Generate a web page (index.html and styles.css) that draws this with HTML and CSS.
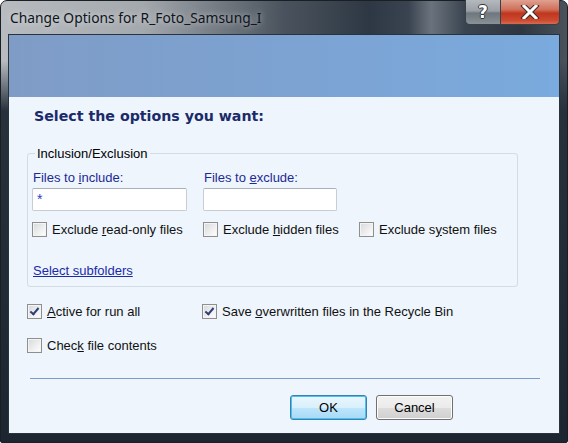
FILE: index.html
```html
<!DOCTYPE html>
<html lang="en">
<head>
  <meta charset="UTF-8">
  <title>Change Options</title>
  <link rel="stylesheet" href="styles.css">
</head>
<body>
  <div class="window">
    <div class="titlebar">
      <span class="title">Change Options for R_Foto_Samsung_I</span>
      <div class="caption-buttons">
        <span class="cap help">?</span>
        <span class="cap close">
          <svg width="20" height="14" viewBox="0 0 20 14">
            <path d="M4 1 L16 13 M16 1 L4 13" stroke="#3a2a28" stroke-width="5" stroke-linecap="square"/>
            <path d="M4 1 L16 13 M16 1 L4 13" stroke="#fff" stroke-width="3" stroke-linecap="square"/>
          </svg>
        </span>
      </div>
    </div>

    <div class="client">
      <div class="banner"></div>

      <div class="content">
        <h1>Select the options you want:</h1>

        <fieldset class="group">
          <legend>Inclusion/Exclusion</legend>
          <div class="fields">
            <div class="field field-include">
              <label>Files to <u>i</u>nclude:</label>
              <div class="textbox">*</div>
            </div>
            <div class="field field-exclude">
              <label>Files to <u>e</u>xclude:</label>
              <div class="textbox"></div>
            </div>
          </div>
          <div class="check-row">
            <label class="check w-readonly"><span class="box"></span><span>Exclude <u>r</u>ead-only files</span></label>
            <label class="check w-hidden"><span class="box"></span><span>Exclude <u>h</u>idden files</span></label>
            <label class="check"><span class="box"></span><span>Exclude s<u>y</u>stem files</span></label>
          </div>
          <a class="link" href="#">Select subfolders</a>
        </fieldset>

        <div class="options">
          <div class="opt-row">
            <label class="check w-active"><span class="box checked"></span><span><u>A</u>ctive for run all</span></label>
            <label class="check"><span class="box checked"></span><span>Save <u>o</u>verwritten files in the Recycle Bin</span></label>
          </div>
          <div class="opt-row">
            <label class="check"><span class="box"></span><span>Chec<u>k</u> file contents</span></label>
          </div>
        </div>

        <div class="separator"></div>

        <div class="buttons">
          <button class="btn default">OK</button>
          <button class="btn">Cancel</button>
        </div>
      </div>
    </div>
  </div>
</body>
</html>
```

FILE: styles.css
```css
body {
  margin: 0;
  padding: 0;
  background-color: #fff;
  font-family: "Liberation Sans", Arial, sans-serif;
}

.window {
  width: 566px;
  height: 441px;
  border: 1px solid #1a1f26;
  border-radius: 7px 7px 2px 2px;
  background:
    linear-gradient(to bottom, rgba(28, 37, 48, 0) 0, rgba(28, 37, 48, 0) 60px, #26313c 110px, #1c2630 100%),
    linear-gradient(to right, #b8bcc0 0, #a4a9ae 25%, #4a535d 50%, #2e3844 65%, #3a4450 72%, #6a737d 76%, #3a4450 82%, #2e3640 92%, #4a525c 100%);
}

.titlebar {
  height: 33px;
  display: flex;
  align-items: flex-start;
  justify-content: space-between;
}

.title {
  font-family: "Noto Sans", sans-serif;
  font-size: 13.8px;
  color: #0e1420;
  padding: 7px 0 0 9px;
  text-shadow: 0 0 6px rgba(255, 255, 255, 0.7);
}

.caption-buttons {
  display: flex;
  margin-right: 7px;
  margin-top: -1px;
  border: 1px solid #3a4048;
  border-top: none;
  border-radius: 0 0 5px 5px;
  overflow: hidden;
  height: 24px;
}

.cap {
  display: flex;
  align-items: center;
  justify-content: center;
  height: 24px;
}

.help {
  width: 34px;
  background: linear-gradient(to bottom, #b4b9be 0, #9aa0a6 45%, #6e767e 55%, #8a9298 100%);
  color: #fff;
  font-family: "DejaVu Sans", sans-serif;
  font-weight: bold;
  font-size: 17px;
  text-shadow: 1px 0 #333, -1px 0 #333, 0 1px #333, 0 -1px #333;
  border-right: 1px solid #3a4048;
}

.close {
  width: 58px;
  background: linear-gradient(to bottom, #e0a090 0, #d0705a 40%, #c0361e 55%, #cc4a30 85%, #d86a50 100%);
}

.client {
  margin: 0 7px;
  height: 398px;
  border: 1px solid #2a323c;
  background-color: #eef5fc;
}

.banner {
  height: 62px;
  background: linear-gradient(to right, #7f9cc6 0, #7ca4d4 60%, #7aaade 100%);
}

.content {
  padding: 0 0 0 18px;
}

h1 {
  margin: 11px 0 0 7px;
  font-family: "DejaVu Sans", Verdana, sans-serif;
  font-size: 14.2px;
  font-weight: bold;
  color: #1b2a6a;
}

.group {
  margin: 22px 0 0 0;
  width: 485px;
  padding: 0 0 8px 4px;
  border: 1px solid #d2dce4;
  border-radius: 3px;
  font-size: 13px;
  color: #000;
}

.group legend {
  padding: 0 2px;
  margin-left: 3px;
}

.fields {
  display: flex;
  margin-top: 9px;
}

.field {
  display: flex;
  flex-direction: column;
}

.field-include {
  width: 171px;
}

.field label {
  color: #1c2a96;
  margin-left: 1px;
}

.textbox {
  margin-top: 3px;
  height: 21px;
  border: 1px solid #c6cdd4;
  border-top-color: #a8b0b8;
  border-radius: 2px;
  background-color: #fff;
  color: #2a40c8;
  padding: 0 4px;
  line-height: 21px;
  font-size: 14px;
}

.field-include .textbox {
  width: 145px;
}

.field-exclude .textbox {
  width: 124px;
}

.check-row {
  display: flex;
  margin-top: 11px;
}

.check {
  display: flex;
  align-items: center;
  color: #111;
  white-space: nowrap;
}

.w-readonly {
  width: 171px;
}

.w-hidden {
  width: 156px;
}

.box {
  width: 13px;
  height: 13px;
  border: 1px solid #8e8f8f;
  background: linear-gradient(135deg, #d6d8da 0, #f4f4f4 70%, #fff 100%);
  box-shadow: inset 0 0 0 1px #f4f4f4;
  margin-right: 5px;
  position: relative;
  flex: none;
}

.box.checked::after {
  content: "";
  position: absolute;
  left: 4px;
  top: 1px;
  width: 3px;
  height: 7px;
  border-right: 2px solid #2c3e74;
  border-bottom: 2px solid #2c3e74;
  transform: rotate(40deg);
}

.link {
  display: inline-block;
  margin: 26px 0 0 1px;
  color: #1a2aa8;
  text-decoration: underline;
}

.options {
  margin-top: 15px;
  font-size: 13px;
}

.opt-row {
  display: flex;
  height: 18px;
  margin-bottom: 16px;
}

.opt-row + .opt-row {
  margin-bottom: 0;
}

.w-active {
  width: 175px;
}

.separator {
  margin: 24px 0 0 3px;
  width: 510px;
  border-top: 1px solid #7b9bcb;
}

.buttons {
  display: flex;
  justify-content: flex-end;
  gap: 9px;
  margin: 16px 106px 0 0;
}

.btn {
  width: 77px;
  height: 25px;
  border: 1px solid #707070;
  border-radius: 3px;
  background: linear-gradient(to bottom, #f2f2f2 0, #ebebeb 50%, #dddddd 51%, #cfcfcf 100%);
  font-family: "Liberation Sans", Arial, sans-serif;
  font-size: 13px;
  color: #000;
  box-shadow: inset 0 0 0 1px #fcfcfc;
}

.btn.default {
  border-color: #3c7fb1;
  background: linear-gradient(to bottom, #eaf6fd 0, #d9f0fc 50%, #bee6fd 51%, #a7d9f5 100%);
  box-shadow: inset 0 0 0 1px #48c2f0;
}
```
